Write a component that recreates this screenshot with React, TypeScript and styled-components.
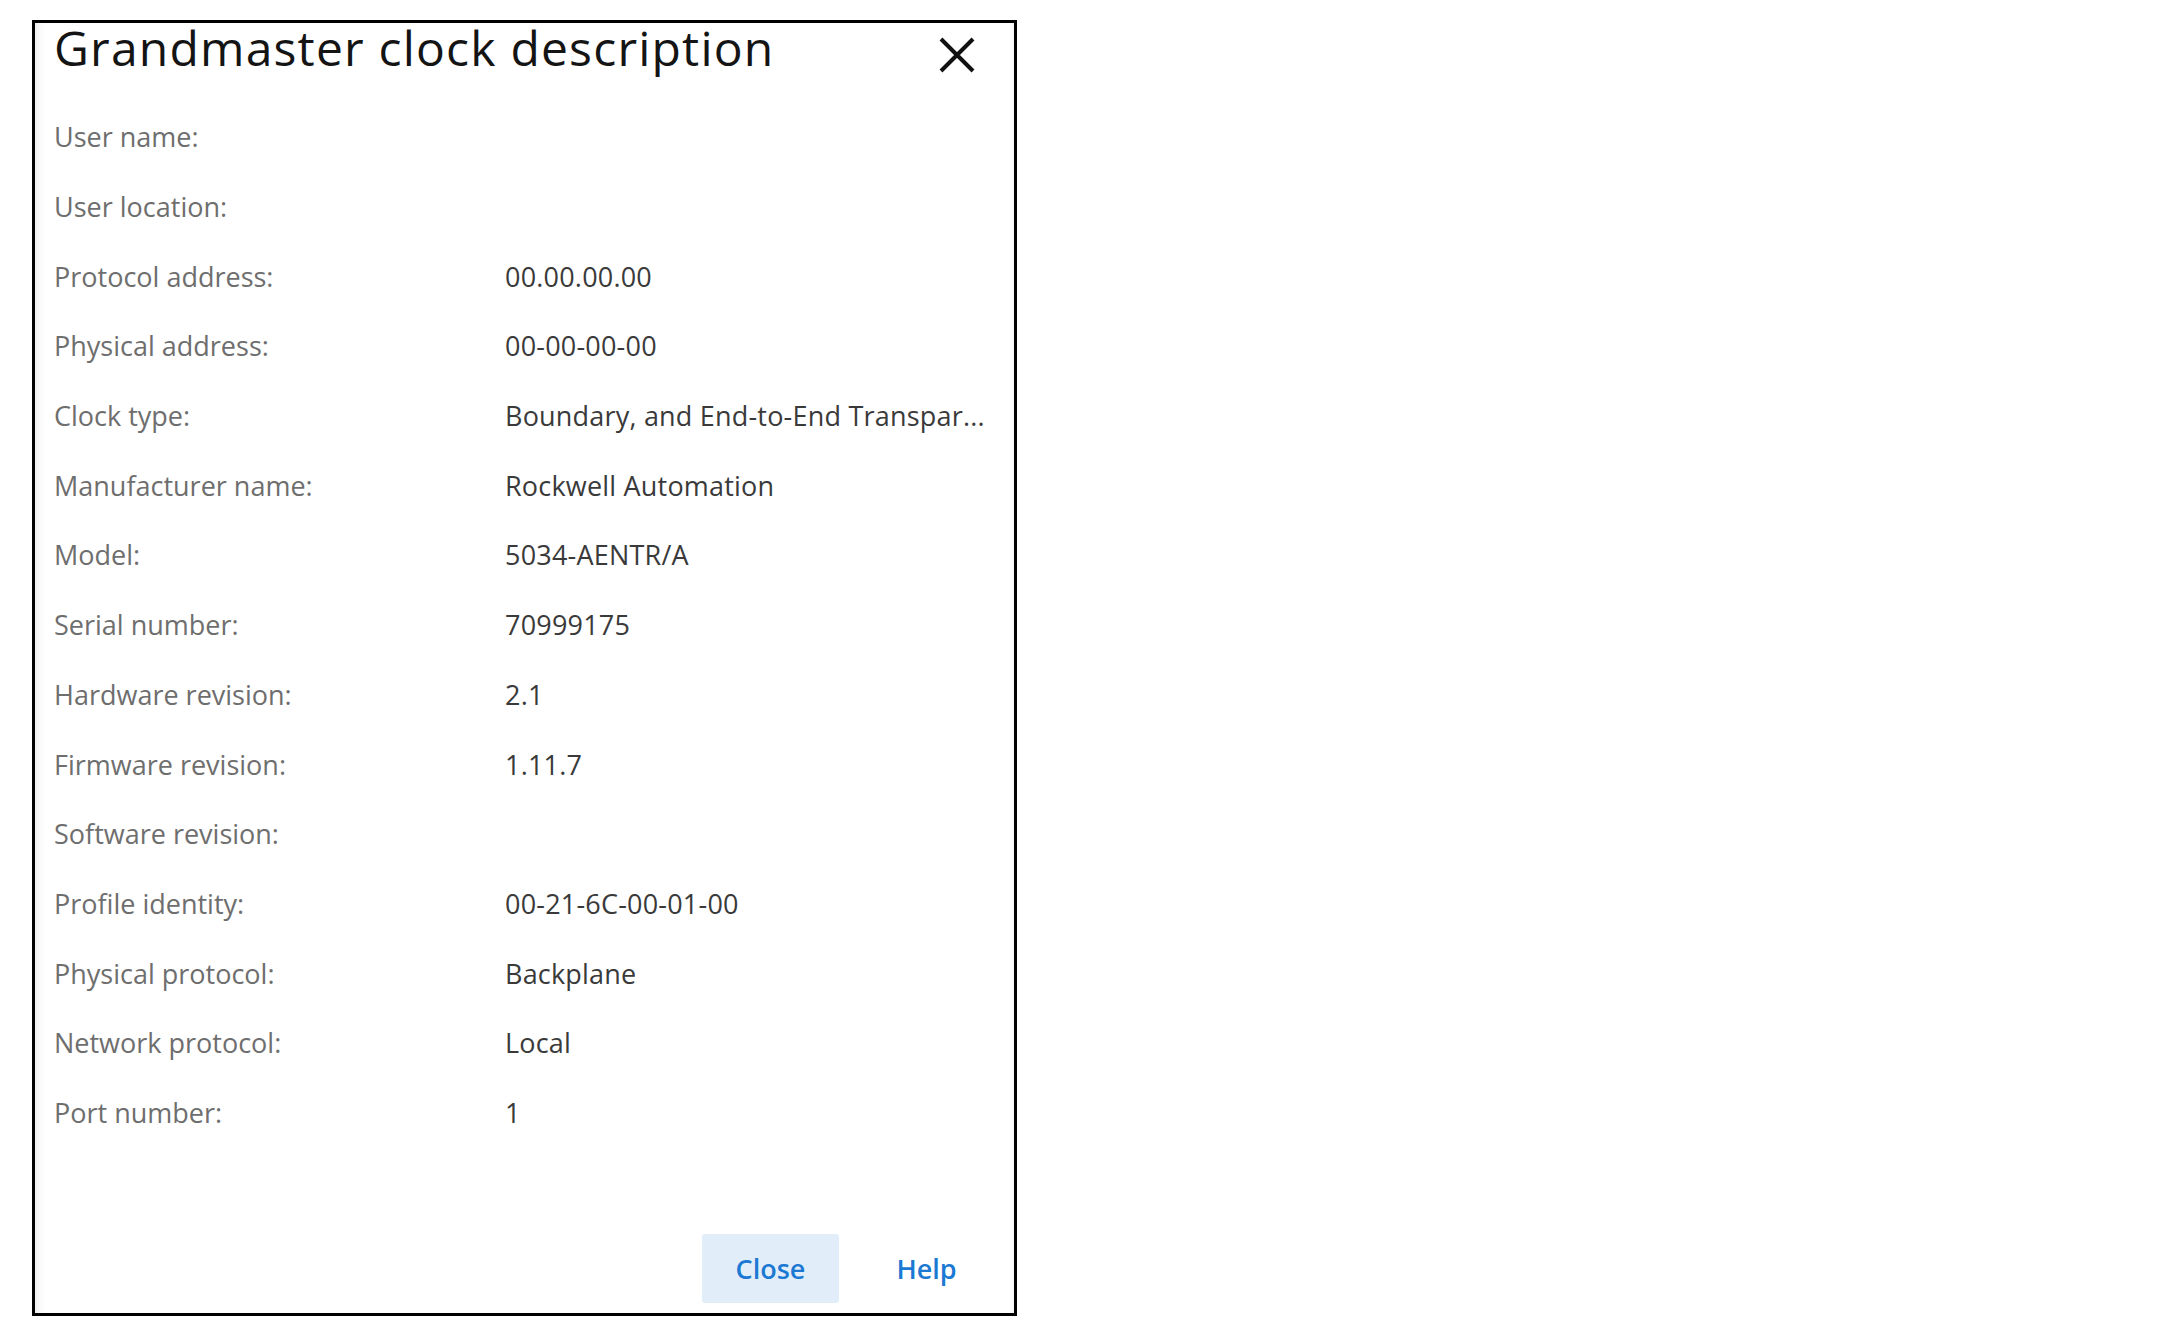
import React from "react";
import styled, {createGlobalStyle} from "styled-components";

const GlobalStyle = createGlobalStyle`
  html, body {
    margin: 0;
    padding: 0;
    background: #ffffff;
  }
  body {
    font-family: "Open Sans", "Noto Sans", "Liberation Sans", sans-serif;
  }
`

const Page = styled.div`
  padding: 20px 0 0 32px;
`

const Dialog = styled.div`
  box-sizing: border-box;
  width: 985px;
  height: 1296px;
  border: 3px solid #000;
  background: #fff;
  box-shadow: inset 8px 0 8px -6px rgba(0, 0, 0, 0.1), inset -5px 0 6px -5px rgba(0, 0, 0, 0.08);
  display: flex;
  flex-direction: column;
`

const Header = styled.div`
  display: flex;
  justify-content: space-between;
  align-items: flex-start;
  height: 54px;
  padding: 0 39px 0 19px;
`

const Title = styled.h1`
  margin: -2px 0 0;
  font-size: 48px;
  line-height: 54px;
  font-weight: 400;
  letter-spacing: 1.2px;
  color: #141414;
`

const CloseIcon = styled.button`
  margin-top: 14px;
  width: 36px;
  height: 36px;
  padding: 0;
  border: none;
  background: none;
  cursor: pointer;
  svg {
    display: block;
  }
`

const Rows = styled.div`
  flex: 1;
  padding-top: 25px;
`

const Row = styled.div`
  display: grid;
  grid-template-columns: 451px 1fr;
  height: 69.7px;
  align-items: center;
  padding: 0 28px 0 19px;
  font-size: 27px;
`

const Label = styled.span`
  color: #6e6e6e;
`

const Value = styled.span`
  color: #3a3a3a;
  white-space: nowrap;
  overflow: hidden;
  text-overflow: ellipsis;
  letter-spacing: 0.2px;
`

const Footer = styled.div`
  display: flex;
  justify-content: flex-end;
  gap: 19px;
  padding: 0 19px 10px 0;
`

const Button = styled.button<{primary?: boolean}>`
  width: 137px;
  height: 69px;
  border: none;
  border-radius: 3px;
  background: ${props => props.primary ? "#e1eefa" : "transparent"};
  color: #1b79d3;
  font-family: inherit;
  font-size: 27px;
  font-weight: 600;
  cursor: pointer;
`

const fields: [string, string][] = [
  ["User name:", ""],
  ["User location:", ""],
  ["Protocol address:", "00.00.00.00"],
  ["Physical address:", "00-00-00-00"],
  ["Clock type:", "Boundary, and End-to-End Transpar..."],
  ["Manufacturer name:", "Rockwell Automation"],
  ["Model:", "5034-AENTR/A"],
  ["Serial number:", "70999175"],
  ["Hardware revision:", "2.1"],
  ["Firmware revision:", "1.11.7"],
  ["Software revision:", ""],
  ["Profile identity:", "00-21-6C-00-01-00"],
  ["Physical protocol:", "Backplane"],
  ["Network protocol:", "Local"],
  ["Port number:", "1"],
];

const App: React.FC = () => {
  return (
    <>
      <GlobalStyle/>
      <Page>
        <Dialog>
          <Header>
            <Title>Grandmaster clock description</Title>
            <CloseIcon aria-label="Close">
              <svg width="36" height="36" viewBox="0 0 36 36">
                <path d="M2 2 L34 34 M34 2 L2 34" stroke="#111" strokeWidth="4" fill="none"/>
              </svg>
            </CloseIcon>
          </Header>
          <Rows>
            {fields.map(([label, value]) => (
              <Row key={label}>
                <Label>{label}</Label>
                <Value>{value}</Value>
              </Row>
            ))}
          </Rows>
          <Footer>
            <Button primary>Close</Button>
            <Button>Help</Button>
          </Footer>
        </Dialog>
      </Page>
    </>
  );
};

export default App;
